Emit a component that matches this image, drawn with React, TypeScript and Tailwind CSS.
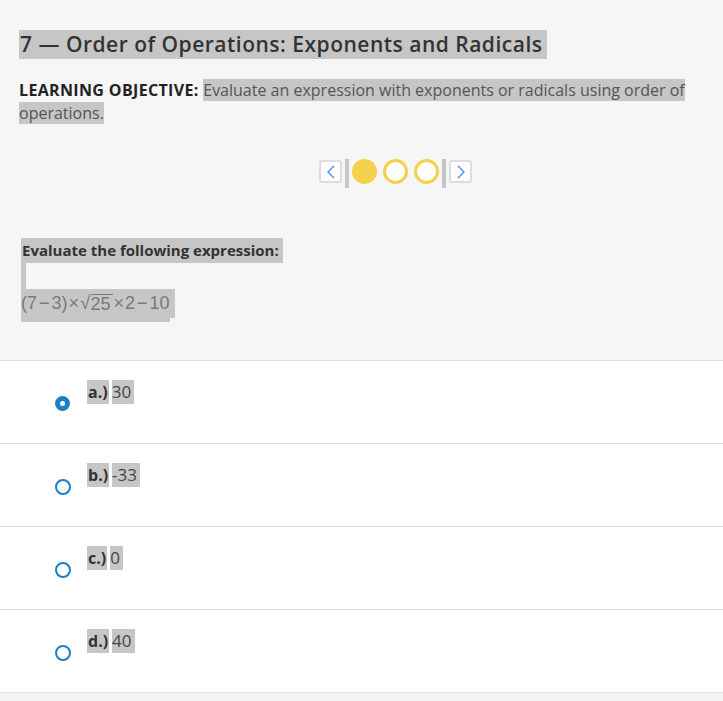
import React from "react";

const HL = "bg-[#c6c6c6]";

function Radio({ checked }: { checked: boolean }) {
  return checked ? (
    <span className="block w-[15px] h-[15px] rounded-full border-[5px] border-[#1a7fc9] bg-white" />
  ) : (
    <span className="block w-[16px] h-[16px] rounded-full border-2 border-[#1a7fc9] bg-white" />
  );
}

function Option({ letter, value, checked }: { letter: string; value: string; checked?: boolean }) {
  return (
    <div className="h-[83px] border-b border-[#dedede] bg-white flex">
      <div className="w-[87px] pt-[35px] pl-[55px]">
        <Radio checked={!!checked} />
      </div>
      <div className="pt-[19px] flex items-start gap-[3px] text-[16px] leading-[24px]">
        <span className={`${HL} font-bold text-[#333] px-[1px]`}>{letter}</span>
        <span className={`${HL} text-[#444] text-[17px] pr-[3px]`}>{value}</span>
      </div>
    </div>
  );
}

export default function App() {
  return (
    <div className="w-[723px] h-[701px] bg-[#f3f3f3] font-['Open_Sans',_sans-serif] text-[#333] overflow-hidden">
      <div className="bg-[#f6f6f6] border-b border-[#dcdce0] h-[361px] pl-[19px] pt-[30px]">
        <h1 className={`inline-block ${HL} text-[21px] tracking-[0.5px] leading-[29px] font-semibold text-[#333] pl-[1px] pr-[5px]`}>
          7 — Order of Operations: Exponents and Radicals
        </h1>
        <p className="mt-[20px] text-[16px] leading-[23px] pr-[30px]">
          <span className="font-bold text-[#222] tracking-[0.35px]">LEARNING OBJECTIVE: </span>
          <span className={`${HL} text-[#555]`}>
            Evaluate an expression with exponents or radicals using order of operations.
          </span>
        </p>
        <div className="mt-[34px] flex justify-center items-start pl-[49px]">
          <div className="flex items-start gap-[3px]">
            <button className="w-[23px] h-[23px] mt-[1px] rounded-[3px] border-2 border-[#dcdce2] bg-white flex items-center justify-center">
              <svg width="10" height="14" viewBox="0 0 10 14"><path d="M8 1 L2 7 L8 13" fill="none" stroke="#3a8ee6" strokeWidth="1.3" /></svg>
            </button>
            <span className="w-[4px] h-[29px] bg-[#c6c6c6]" />
            <span className="w-[25px] h-[25px] rounded-full bg-[#f5d04a]" />
            <span className="w-[25px] h-[25px] rounded-full border-[3px] border-[#f5d04a] bg-white ml-[3px]" />
            <span className="w-[25px] h-[25px] rounded-full border-[3px] border-[#f5d04a] bg-white ml-[3px]" />
            <span className="w-[4px] h-[29px] bg-[#c6c6c6]" />
            <button className="w-[23px] h-[23px] mt-[1px] rounded-[3px] border-2 border-[#dcdce2] bg-white flex items-center justify-center">
              <svg width="10" height="14" viewBox="0 0 10 14"><path d="M2 1 L8 7 L2 13" fill="none" stroke="#3a8ee6" strokeWidth="1.3" /></svg>
            </button>
          </div>
        </div>
        <div className="mt-[50px] pl-[2px]">
          <div className={`inline-block ${HL} text-[15px] leading-[25px] font-bold text-[#333] pl-[1px] pr-[4px]`}>
            Evaluate the following expression:
          </div>
          <div className="w-[5px] h-[26px] bg-[#c6c6c6]" />
          <div className={`inline-block ${HL} pr-[5px]`}>
            <div className="flex items-end h-[29px] font-['Liberation_Sans',_sans-serif] text-[18px] text-[#7a7a7a] leading-[22px] pb-[4px]">
              <span>(7</span>
              <span className="px-[2px]">−</span>
              <span>3)</span>
              <span className="px-[1px]">×</span>
              <span className="text-[19px]">√</span>
              <span className="border-t border-[#7a7a7a] leading-[19px] pr-[2px]">25</span>
              <span className="px-[1px]">×</span>
              <span>2</span>
              <span className="px-[2px]">−</span>
              <span>10</span>
            </div>
          </div>
          <div className="w-[149px] h-[4px] bg-[#c6c6c6]" />
        </div>
      </div>
      <Option letter="a.)" value="30" checked />
      <Option letter="b.)" value="-33" />
      <Option letter="c.)" value="0" />
      <Option letter="d.)" value="40" />
    </div>
  );
}
